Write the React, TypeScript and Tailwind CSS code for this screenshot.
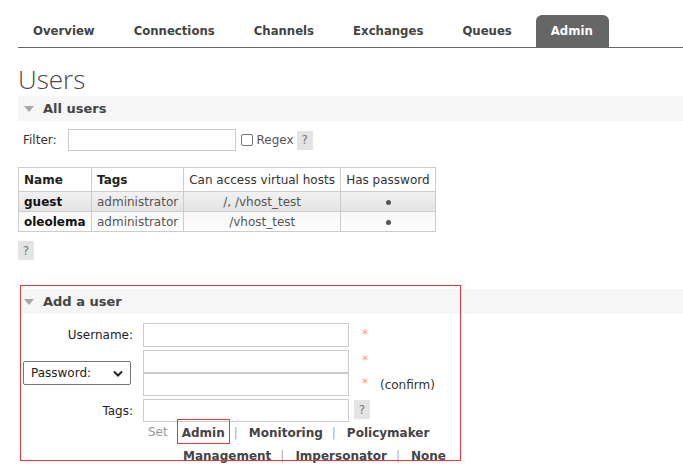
const tabs = ["Overview", "Connections", "Channels", "Exchanges", "Queues", "Admin"];

type User = { name: string; tags: string; vhosts: string };

const users: User[] = [
  { name: "guest", tags: "administrator", vhosts: "/, /vhost_test" },
  { name: "oleolema", tags: "administrator", vhosts: "/vhost_test" },
];

function Help() {
  return (
    <span className="inline-flex h-[19px] w-[16px] items-center justify-center bg-[#e4e4e4] text-[12px] text-[#777]">
      ?
    </span>
  );
}

function SectionBar({ title, inset }: { title: string; inset: string }) {
  return (
    <div className="flex h-[25px] items-center bg-[#f6f6f6]">
      <svg width="10" height="6" viewBox="0 0 10 6" className={inset}>
        <path d="M0 0 L10 0 L5 6 Z" fill="#a8a8a8" />
      </svg>
      <span className="ml-[9px] text-[13px] font-bold text-[#444]">{title}</span>
    </div>
  );
}

function Sep({ first }: { first?: boolean }) {
  return (
    <span className={(first ? "ml-[4px] mr-[11px]" : "ml-[9px] mr-[11px]") + " font-normal text-[#aaa]"}>|</span>
  );
}

export default function App() {
  return (
    <main className="min-h-screen bg-white font-['DejaVu_Sans',Verdana,sans-serif] text-[12px] text-[#484848]">
      {/* tabs */}
      <div className="ml-[18px] mt-[15px] flex h-[33px] items-end gap-[9px] border-b border-[#666]">
        {tabs.map((t) => (
          <div
            key={t}
            className={
              "flex h-[32px] items-center px-[15px] font-['DejaVu_Sans_Condensed','DejaVu_Sans',sans-serif] text-[13px] font-bold [font-stretch:condensed] " +
              (t === "Admin" ? "rounded-t-[6px] bg-[#666] pr-[16px] text-white" : "text-[#444]")
            }
          >
            {t}
          </div>
        ))}
      </div>

      <h1 className="ml-[18px] mt-[14px] font-['Open_Sans',sans-serif] text-[26px] font-light leading-[34px] text-[#484848]">
        Users
      </h1>

      <div className="ml-[18px]">
        <SectionBar title="All users" inset="ml-[6px]" />

        <div className="mt-[8px] flex items-center">
          <span className="ml-[5px] text-[#333]">Filter:</span>
          <input className="ml-[11px] h-[22px] w-[168px] border border-[#ccc] outline-none" />
          <span className="ml-[5px] inline-block h-[12px] w-[12px] rounded-[2px] border border-[#767676] bg-white" />
          <span className="ml-[4px] text-[#555]">Regex</span>
          <span className="ml-[3px]">
            <Help />
          </span>
        </div>

        <table className="mt-[16px] border-collapse text-[12px]">
          <thead>
            <tr className="h-[24px] bg-white">
              <th className="w-[73px] border border-[#ccc] px-[5px] text-left font-bold text-[#222]">Name</th>
              <th className="w-[92px] border border-[#ccc] px-[5px] text-left font-bold text-[#222]">Tags</th>
              <th className="w-[157px] border border-[#ccc] px-[5px] text-left font-normal text-[#333]">
                Can access virtual hosts
              </th>
              <th className="w-[95px] border border-[#ccc] px-[5px] text-left font-normal text-[#333]">Has password</th>
            </tr>
          </thead>
          <tbody>
            {users.map((u, i) => (
              <tr
                key={u.name}
                className={
                  "h-[20px] " +
                  (i === 0 ? "bg-linear-to-b from-[#f1f1f1] to-[#e3e3e3]" : "bg-linear-to-b from-[#f7f7f7] to-white")
                }
              >
                <td className="border border-[#ccc] px-[5px] font-bold text-[#111]">{u.name}</td>
                <td className="border border-[#ccc] px-[5px] text-[#555]">{u.tags}</td>
                <td className="border border-[#ccc] px-[5px] text-center text-[#555]">{u.vhosts}</td>
                <td className="border border-[#ccc] px-[5px] text-center text-[#555]">
                  <span className="inline-block h-[5px] w-[5px] rounded-full bg-[#555] align-middle" />
                </td>
              </tr>
            ))}
          </tbody>
        </table>

        <div className="mt-[9px]">
          <Help />
        </div>
      </div>

      {/* add a user */}
      <div className="relative ml-[22px] mt-[29px]">
        <SectionBar title="Add a user" inset="ml-[2px]" />

        <div className="mt-[9px] grid grid-cols-[111px_206px_auto] gap-x-[10px] text-[#222]">
          <div className="flex h-[24px] items-center justify-end">Username:</div>
          <input className="h-[24px] border border-[#ccc] outline-none" />
          <div className="flex h-[24px] items-start pl-[3px] pt-[2px] text-[#f39c8f]">*</div>

          <div className="mt-[3px] flex items-center">
            <div className="ml-[1px] flex h-[24px] w-[108px] items-center justify-between rounded-[2px] border border-[#767676] px-[7px] text-[#222]">
              <span>Password:</span>
              <svg width="10" height="7" viewBox="0 0 10 7">
                <path d="M1 1.5 L5 5.5 L9 1.5" stroke="#222" strokeWidth="2" fill="none" />
              </svg>
            </div>
          </div>
          <div className="mt-[3px] flex flex-col">
            <input className="h-[23px] border border-[#ccc] outline-none" />
            <input className="h-[23px] border border-[#ccc] outline-none" />
          </div>
          <div className="mt-[3px] flex flex-col pl-[3px]">
            <div className="h-[23px] pt-[1px] text-[#f39c8f]">*</div>
            <div className="flex h-[23px] items-start pt-[1px]">
              <span className="text-[#f39c8f]">*</span>
              <span className="ml-[12px] mt-[2px] text-[#333]">(confirm)</span>
            </div>
          </div>

          <div className="mt-[3px] flex h-[23px] items-center justify-end">Tags:</div>
          <input className="mt-[3px] h-[23px] border border-[#ccc] outline-none" />
          <div className="mt-[4px] -ml-[5px]">
            <Help />
          </div>
        </div>

        <div className="ml-[126px] mt-[-3px] flex items-center text-[12px]">
          <span className="text-[#999]">Set</span>
          <span className="ml-[9px] inline-flex h-[25px] items-center border border-[#e8363b] px-[4px] pt-[3px] font-bold text-[#444]">
            Admin
          </span>
          <span className="flex items-center pt-[3px] font-bold text-[#444]">
            <Sep first />
            Monitoring
            <Sep />
            Policymaker
          </span>
        </div>
        <div className="ml-[161px] mt-[3px] flex items-center text-[12px] font-bold text-[#444]">
          Management
          <Sep />
          Impersonator
          <Sep />
          None
        </div>

        <div className="pointer-events-none absolute left-[-2px] top-[-4px] h-[176px] w-[441px] border border-[#e8363b]" />
      </div>
    </main>
  );
}
